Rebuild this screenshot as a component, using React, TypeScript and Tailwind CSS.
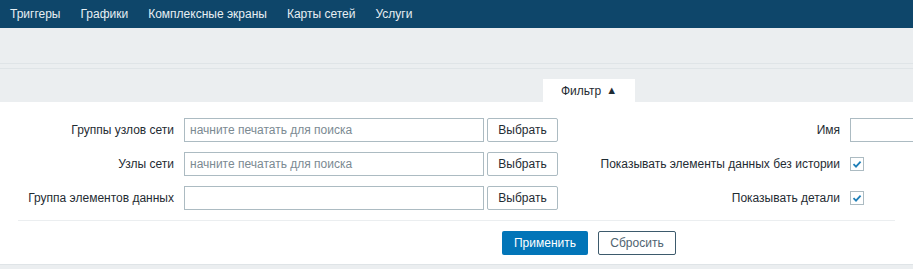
import React from "react";

const font = { fontFamily: '"Liberation Sans", Arial, sans-serif' };

function Check() {
  return (
    <div className="w-[14px] h-[14px] border border-[#acbbc2] bg-white flex items-center justify-center">
      <svg width="10" height="10" viewBox="0 0 10 10">
        <path d="M1.5 5.2 L4 7.6 L8.6 2.6" fill="none" stroke="#1f7fb8" strokeWidth="1.8" />
      </svg>
    </div>
  );
}

function LeftRow({ label, placeholder }: { label: string; placeholder?: string }) {
  return (
    <div className="flex items-center w-[558px] shrink-0">
      <div className="w-[174px] shrink-0 text-right text-[12px] text-[#1f2c33]">{label}</div>
      <div className="ml-[10px] w-[300px] shrink-0 h-[24px] border border-[#acbbc2] bg-white flex items-center px-[5px] text-[12px] text-[#7b8a92]">
        {placeholder}
      </div>
      <div className="ml-[3px] w-[71px] shrink-0 h-[24px] border border-[#acbbc2] rounded-[2px] bg-white flex items-center justify-center text-[12px] text-[#1f2c33]">
        Выбрать
      </div>
    </div>
  );
}

export default function App() {
  const nav = ["Триггеры", "Графики", "Комплексные экраны", "Карты сетей", "Услуги"];
  return (
    <div className="w-[913px] h-[269px] overflow-hidden bg-[#ebeef0]" style={font}>
      <div className="h-[28px] bg-[#0e466a] flex items-center">
        {nav.map((n) => (
          <div key={n} className="px-[10px] text-[12px] text-[#e6eef3]">
            {n}
          </div>
        ))}
      </div>
      <div className="h-[36px] border-b border-[#dfe4e7]" />
      <div className="h-[4px]" />
      <div className="border-t border-[#dfe4e7] h-[34px] flex items-end">
        <div className="ml-[543px] w-[92px] h-[23px] bg-white flex items-center justify-center text-[12px] text-[#1f2c33]">
          Фильтр <span className="ml-[5px] text-[11px] leading-none">▲</span>
        </div>
      </div>
      <div className="bg-white h-[162px] pt-[16px] overflow-hidden">
        <div className="flex flex-col gap-[10px]">
          <div className="flex items-center">
            <LeftRow label="Группы узлов сети" placeholder="начните печатать для поиска" />
            <div className="w-[282px] shrink-0 text-right text-[12px] text-[#1f2c33]">Имя</div>
            <div className="ml-[10px] w-[120px] h-[24px] border border-[#acbbc2] bg-white shrink-0" />
          </div>
          <div className="flex items-center">
            <LeftRow label="Узлы сети" placeholder="начните печатать для поиска" />
            <div className="w-[282px] shrink-0 text-right text-[12px] text-[#1f2c33]">Показывать элементы данных без истории</div>
            <div className="ml-[10px] shrink-0">
              <Check />
            </div>
          </div>
          <div className="flex items-center">
            <LeftRow label="Группа элементов данных" />
            <div className="w-[282px] shrink-0 text-right text-[12px] text-[#1f2c33]">Показывать детали</div>
            <div className="ml-[10px] shrink-0">
              <Check />
            </div>
          </div>
        </div>
        <div className="mt-[10px] mx-[18px] border-t border-[#ebeef0]" />
        <div className="mt-[10px] flex items-center pl-[502px] gap-[10px]">
          <div className="w-[86px] h-[24px] rounded-[2px] bg-[#0275b8] flex items-center justify-center text-[12px] text-white">
            Применить
          </div>
          <div className="w-[78px] h-[24px] rounded-[2px] border border-[#3d5a6c] bg-white flex items-center justify-center text-[12px] text-[#4f6370]">
            Сбросить
          </div>
        </div>
      </div>
      <div className="border-t border-[#dfe4e7]" />
    </div>
  );
}
